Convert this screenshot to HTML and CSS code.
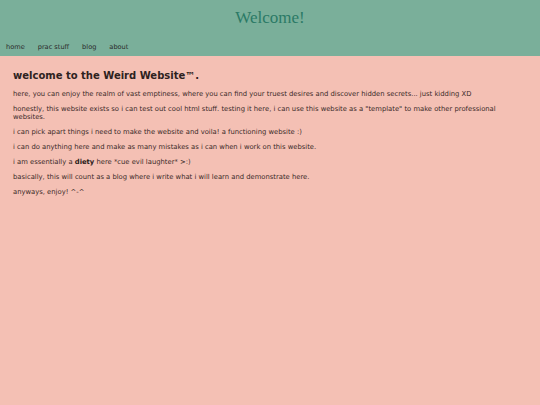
FILE: index.html
```html
<!DOCTYPE html>
<html>
<head>
<meta charset="utf-8">
<link rel="stylesheet" href="styles.css">
</head>
<body>
<header class="top">
  <h1 class="title">Welcome!</h1>
  <nav class="nav">
    <a href="#">home</a>
    <a href="#">prac stuff</a>
    <a href="#">blog</a>
    <a href="#">about</a>
  </nav>
</header>
<main class="content">
  <h2 class="heading">welcome to the Weird Website™.</h2>
  <p>here, you can enjoy the realm of vast emptiness, where you can find your truest desires and discover hidden secrets... just kidding XD</p>
  <p>honestly, this website exists so i can test out cool html stuff. testing it here, i can use this website as a "template" to make other professional websites.</p>
  <p>i can pick apart things i need to make the website and voila! a functioning website :)</p>
  <p>i can do anything here and make as many mistakes as i can when i work on this website.</p>
  <p>i am essentially a <b>diety</b> here *cue evil laughter* &gt;:)</p>
  <p>basically, this will count as a blog where i write what i will learn and demonstrate here.</p>
  <p>anyways, enjoy! ^-^</p>
</main>
</body>
</html>
```

FILE: styles.css
```css
html, body {
  margin: 0;
  padding: 0;
  height: 100%;
}
body {
  background: #f4c0b4;
  font-family: "DejaVu Sans", Verdana, sans-serif;
  color: #3a2a28;
}
.top {
  background: #7aaf9a;
  height: 56px;
  display: flex;
  flex-direction: column;
}
.title {
  margin: 0;
  padding-top: 8px;
  text-align: center;
  font-family: "Liberation Serif", "Times New Roman", serif;
  font-weight: normal;
  font-size: 17px;
  line-height: 20px;
  color: #2b7a66;
}
.nav {
  display: flex;
  gap: 13px;
  padding: 14px 0 0 6px;
  font-size: 6.6px;
  line-height: 10px;
}
.nav a {
  color: #2a2a2a;
  text-decoration: none;
}
.content {
  padding: 13px 24px 12px 13px;
}
.heading {
  margin: 0 0 7px 0;
  font-size: 10px;
  line-height: 14px;
  font-weight: bold;
  color: #2e2220;
}
.content p {
  margin: 0 0 7px 0;
  font-size: 6.8px;
  line-height: 8px;
}
.content b {
  color: #2a1a18;
}
```
